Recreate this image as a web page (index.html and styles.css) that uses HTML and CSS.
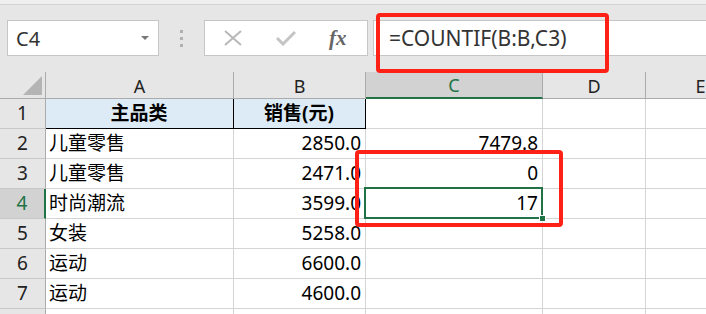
FILE: index.html
```html
<!DOCTYPE html>
<html lang="zh-CN">
<head>
  <meta charset="UTF-8">
  <title>COUNTIF</title>
  <link rel="stylesheet" href="styles.css">
</head>
<body>
  <div class="app">
    <div class="titlebar"></div>
    <div class="formula-bar">
      <div class="name-box">
        <span>C4</span>
        <span class="caret"></span>
      </div>
      <div class="grip"><i></i><i></i><i></i></div>
      <div class="fx-buttons">
        <svg width="20" height="16" viewBox="0 0 20 16"><path d="M2 1 L18 15 M18 1 L2 15" stroke="#b8b8b8" stroke-width="2" fill="none"/></svg>
        <svg width="20" height="16" viewBox="0 0 20 16"><path d="M1 8 L7 14 L19 2" stroke="#c4c4c4" stroke-width="3" fill="none"/></svg>
        <span class="fx">fx</span>
      </div>
      <div class="formula-input">=COUNTIF(B:B,C3)</div>
    </div>

    <div class="sheet">
      <div class="corner"><span class="corner-tri"></span></div>
      <div class="col-head">A</div>
      <div class="col-head">B</div>
      <div class="col-head active">C</div>
      <div class="col-head">D</div>
      <div class="col-head">E</div>

      <div class="row-head">1</div>
      <div class="cell title">主品类</div>
      <div class="cell title title-last">销售(元)</div>
      <div class="cell"></div>
      <div class="cell"></div>
      <div class="cell"></div>

      <div class="row-head">2</div>
      <div class="cell">儿童零售</div>
      <div class="cell num">2850.0</div>
      <div class="cell num">7479.8</div>
      <div class="cell"></div>
      <div class="cell"></div>

      <div class="row-head">3</div>
      <div class="cell">儿童零售</div>
      <div class="cell num">2471.0</div>
      <div class="cell num">0</div>
      <div class="cell"></div>
      <div class="cell"></div>

      <div class="row-head active">4</div>
      <div class="cell">时尚潮流</div>
      <div class="cell num">3599.0</div>
      <div class="cell num">17</div>
      <div class="cell"></div>
      <div class="cell"></div>

      <div class="row-head">5</div>
      <div class="cell">女装</div>
      <div class="cell num">5258.0</div>
      <div class="cell"></div>
      <div class="cell"></div>
      <div class="cell"></div>

      <div class="row-head">6</div>
      <div class="cell">运动</div>
      <div class="cell num">6600.0</div>
      <div class="cell"></div>
      <div class="cell"></div>
      <div class="cell"></div>

      <div class="row-head">7</div>
      <div class="cell">运动</div>
      <div class="cell num">4600.0</div>
      <div class="cell"></div>
      <div class="cell"></div>
      <div class="cell"></div>

      <div class="row-head"></div>
      <div class="cell"></div>
      <div class="cell"></div>
      <div class="cell"></div>
      <div class="cell"></div>
      <div class="cell"></div>

      <div class="selection"><span class="fill-handle"></span></div>
    </div>

    <div class="mark mark-formula"></div>
    <div class="mark mark-cells"></div>
  </div>
</body>
</html>
```

FILE: styles.css
```css
* {
  box-sizing: border-box;
}

body {
  margin: 0;
  background: #e6e6e6;
  font-family: "Noto Sans", "Noto Sans CJK SC", sans-serif;
  overflow: hidden;
}

.app {
  position: relative;
  width: 706px;
  height: 314px;
  overflow: hidden;
}

.titlebar {
  height: 5px;
  background: #efefef;
  border-bottom: 1px solid #d4d4d4;
}

.formula-bar {
  display: flex;
  align-items: center;
  height: 67px;
  padding: 15px 0 16px;
}

.name-box {
  display: flex;
  align-items: center;
  justify-content: space-between;
  width: 152px;
  height: 36px;
  margin-left: 7px;
  padding: 0 9px 0 8px;
  background: #fff;
  border: 1px solid #c6c6c6;
  font-size: 20px;
  color: #333;
}

.caret {
  width: 0;
  height: 0;
  border-left: 4px solid transparent;
  border-right: 4px solid transparent;
  border-top: 4px solid #777;
}

.grip {
  display: flex;
  flex-direction: column;
  gap: 4px;
  width: 45px;
  align-items: center;
}

.grip i {
  display: block;
  width: 3px;
  height: 3px;
  background: #b0b0b0;
}

.fx-buttons {
  display: flex;
  align-items: center;
  gap: 33px;
  width: 164px;
  height: 36px;
  padding-left: 18px;
  background: #fff;
  border: 1px solid #c6c6c6;
}

.fx {
  font-family: "Liberation Serif", serif;
  font-style: italic;
  font-weight: bold;
  font-size: 21px;
  color: #666;
}

.formula-input {
  flex: 1;
  height: 36px;
  margin-left: 5px;
  padding-left: 15px;
  display: flex;
  align-items: center;
  background: #fff;
  border: 1px solid #c6c6c6;
  border-right: none;
  font-size: 21px;
  color: #333;
}

.sheet {
  position: relative;
  display: grid;
  grid-template-columns: 46px 188px 132px 177px 103px 110px;
  grid-template-rows: 27px repeat(8, 30px);
  background: #fff;
}

.corner,
.col-head,
.row-head {
  background: #e6e6e6;
  color: #222;
}

.corner {
  position: relative;
  border-right: 1px solid #ababab;
  border-bottom: 1px solid #ababab;
}

.corner-tri {
  position: absolute;
  right: 3px;
  bottom: 3px;
  width: 0;
  height: 0;
  border-left: 19px solid transparent;
  border-bottom: 19px solid #b4b4b4;
}

.col-head {
  display: flex;
  align-items: center;
  justify-content: center;
  padding-top: 1px;
  font-size: 18px;
  border-right: 1px solid #ababab;
  border-bottom: 1px solid #ababab;
}

.col-head.active {
  background: #d2d2d2;
  color: #217346;
  border-bottom: 2px solid #217346;
}

.row-head {
  display: flex;
  align-items: flex-end;
  justify-content: center;
  padding-bottom: 2px;
  font-size: 19px;
  border-right: 1px solid #ababab;
  border-bottom: 1px solid #c8c8c8;
}

.row-head.active {
  background: #d2d2d2;
  color: #217346;
  border-right: 2px solid #217346;
}

.cell {
  display: flex;
  align-items: flex-end;
  padding: 0 4px 2px 3px;
  font-size: 19px;
  color: #000;
  border-right: 1px solid #d4d4d4;
  border-bottom: 1px solid #d4d4d4;
  white-space: nowrap;
}

.cell.num {
  justify-content: flex-end;
}

.cell.title {
  justify-content: center;
  font-weight: bold;
  background: #ddebf7;
  border-bottom: 1px solid #000;
  border-right: 1px solid #000;
}

.selection {
  position: absolute;
  left: 364px;
  top: 115px;
  width: 179px;
  height: 32px;
  border: 2px solid #217346;
}

.fill-handle {
  position: absolute;
  right: -5px;
  bottom: -5px;
  width: 7px;
  height: 7px;
  background: #217346;
  border: 1px solid #fff;
}

.mark {
  position: absolute;
  border: 4px solid #ff2116;
  border-radius: 4px;
}

.mark-formula {
  left: 376px;
  top: 13px;
  width: 233px;
  height: 60px;
}

.mark-cells {
  left: 355px;
  top: 150px;
  width: 208px;
  height: 77px;
}
```
